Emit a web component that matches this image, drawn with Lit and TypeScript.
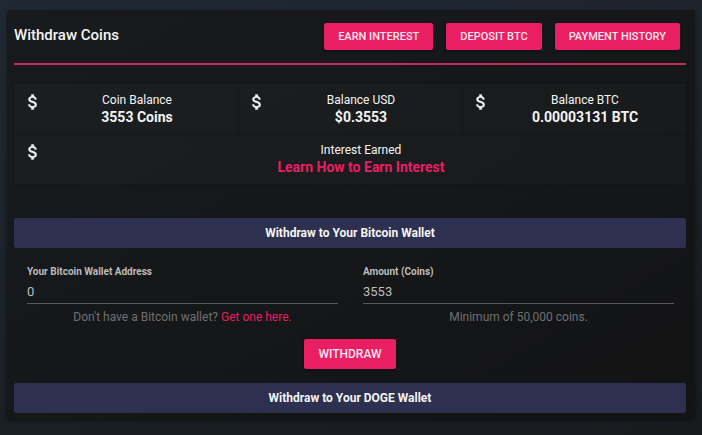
import { LitElement, html, css, svg } from "lit";
import { customElement, property } from "lit/decorators.js";

const dollar = svg`<path d="M11.8 10.9c-2.27-.59-3-1.2-3-2.15 0-1.09 1.01-1.85 2.7-1.85 1.78 0 2.44.85 2.5 2.1h2.21c-.07-1.72-1.12-3.3-3.21-3.81V3h-3v2.16c-1.94.42-3.5 1.68-3.5 3.61 0 2.31 1.91 3.46 4.7 4.13 2.5.6 3 1.48 3 2.41 0 .69-.49 1.79-2.7 1.79-2.06 0-2.87-.92-2.98-2.1h-2.2c.12 2.19 1.76 3.42 3.68 3.83V21h3v-2.15c1.95-.37 3.5-1.5 3.5-3.55 0-2.84-2.43-3.81-4.7-4.4z"/>`;

@customElement("stat-tile")
export class StatTile extends LitElement {
  @property() label = "";
  @property() value = "";
  @property() href = "";

  static styles = css`
    :host {
      display: flex;
      align-items: flex-start;
      gap: 1px;
      padding: 8px 8px 8px 9px;
      background: rgba(255, 255, 255, 0.02);
      box-shadow: 0 0 3px rgba(0, 0, 0, 0.2);
      color: #f4f4f4;
    }
    .icon {
      flex: none;
      width: 20px;
      height: 20px;
      fill: currentColor;
      stroke: currentColor;
      stroke-width: 0.4;
    }
    .text {
      flex: 1;
      text-align: center;
      font-size: 12px;
      line-height: 16px;
    }
    .value {
      font-size: 14px;
      line-height: 18px;
      font-weight: 700;
    }
    a {
      color: #e91e63;
      text-decoration: none;
    }
  `;

  render() {
    return html`
      <svg class="icon" viewBox="0 0 24 24" aria-hidden="true">${dollar}</svg>
      <div class="text">
        <div>${this.label}</div>
        <div class="value">
          ${this.href ? html`<a href=${this.href}>${this.value}</a>` : this.value}
        </div>
      </div>
    `;
  }
}

@customElement("app-root")
export class AppRoot extends LitElement {
  static styles = css`
    :host {
      display: block;
      box-sizing: border-box;
      min-height: 100vh;
      padding: 10px 7px 14px;
      background: linear-gradient(165deg, #202833 0%, #1c2229 50%, #181b1e 100%);
      color: #f4f4f4;
      font-family: Roboto, "Liberation Sans", sans-serif;
      font-size: 12px;
    }
    * {
      box-sizing: border-box;
    }
    .card {
      padding: 0 9px 7px 7px;
      border-radius: 3px;
      background: linear-gradient(150deg, #181b1e 0%, #151719 50%, #131314 100%);
      box-shadow: 0 1px 4px rgba(0, 0, 0, 0.4);
    }
    .head {
      display: flex;
      align-items: center;
      justify-content: space-between;
      padding: 13px 6px 13px 0;
      border-bottom: 2px solid #c22c5b;
    }
    h1 {
      margin: 0;
      padding-bottom: 4px;
      font-size: 15px;
      line-height: 20px;
      font-weight: 500;
    }
    .actions {
      display: flex;
      gap: 13px;
    }
    button {
      height: 27px;
      padding: 0 14px;
      border: 0;
      border-radius: 2px;
      background: #e91e63;
      box-shadow: 0 1px 3px rgba(0, 0, 0, 0.5);
      color: #fbe9ef;
      font: 500 11px/16px Roboto, "Liberation Sans", sans-serif;
      text-transform: uppercase;
    }
    .stats {
      display: grid;
      grid-template-columns: repeat(3, 1fr);
      margin: 19px 0 34px;
    }
    .wide {
      grid-column: 1 / -1;
    }
    h2 {
      margin: 0;
      border-radius: 2px;
      background: #2d304e;
      font-size: 12px;
      line-height: 30px;
      font-weight: 700;
      text-align: center;
    }
    .fields {
      display: grid;
      grid-template-columns: 1fr 1fr;
      padding-top: 16px;
    }
    .field {
      padding: 0 12px 0 13px;
    }
    label {
      display: block;
      color: #bdbdbd;
      font-size: 10px;
      line-height: 16px;
      font-weight: 700;
    }
    input {
      display: block;
      width: 100%;
      height: 24px;
      padding: 0;
      border: 0;
      border-bottom: 1px solid #58585a;
      border-radius: 0;
      outline: none;
      background: transparent;
      color: #bdbdbd;
      font: 400 13px/22px Roboto, "Liberation Sans", sans-serif;
    }
    .hint {
      margin: 5px 0 0;
      color: #707072;
      line-height: 16px;
      text-align: center;
    }
    .hint a {
      color: #e91e63;
      text-decoration: none;
    }
    .submit {
      display: flex;
      justify-content: center;
      padding: 14px 0;
    }
    .submit button {
      height: 30px;
      font-size: 12px;
    }
  `;

  render() {
    return html`
      <main class="card">
        <header class="head">
          <h1>Withdraw Coins</h1>
          <div class="actions">
            <button type="button">Earn Interest</button>
            <button type="button">Deposit BTC</button>
            <button type="button">Payment History</button>
          </div>
        </header>
        <section class="stats">
          <stat-tile label="Coin Balance" value="3553 Coins"></stat-tile>
          <stat-tile label="Balance USD" value="$0.3553"></stat-tile>
          <stat-tile label="Balance BTC" value="0.00003131 BTC"></stat-tile>
          <stat-tile class="wide" label="Interest Earned" value="Learn How to Earn Interest" href="#interest"></stat-tile>
        </section>
        <h2>Withdraw to Your Bitcoin Wallet</h2>
        <form>
          <div class="fields">
            <div class="field">
              <label for="address">Your Bitcoin Wallet Address</label>
              <input id="address" type="text" value="0" />
              <p class="hint">Don't have a Bitcoin wallet? <a href="#wallet">Get one here.</a></p>
            </div>
            <div class="field">
              <label for="amount">Amount (Coins)</label>
              <input id="amount" type="text" inputmode="numeric" value="3553" />
              <p class="hint">Minimum of 50,000 coins.</p>
            </div>
          </div>
          <div class="submit"><button type="button">Withdraw</button></div>
        </form>
        <h2>Withdraw to Your DOGE Wallet</h2>
      </main>
    `;
  }
}
